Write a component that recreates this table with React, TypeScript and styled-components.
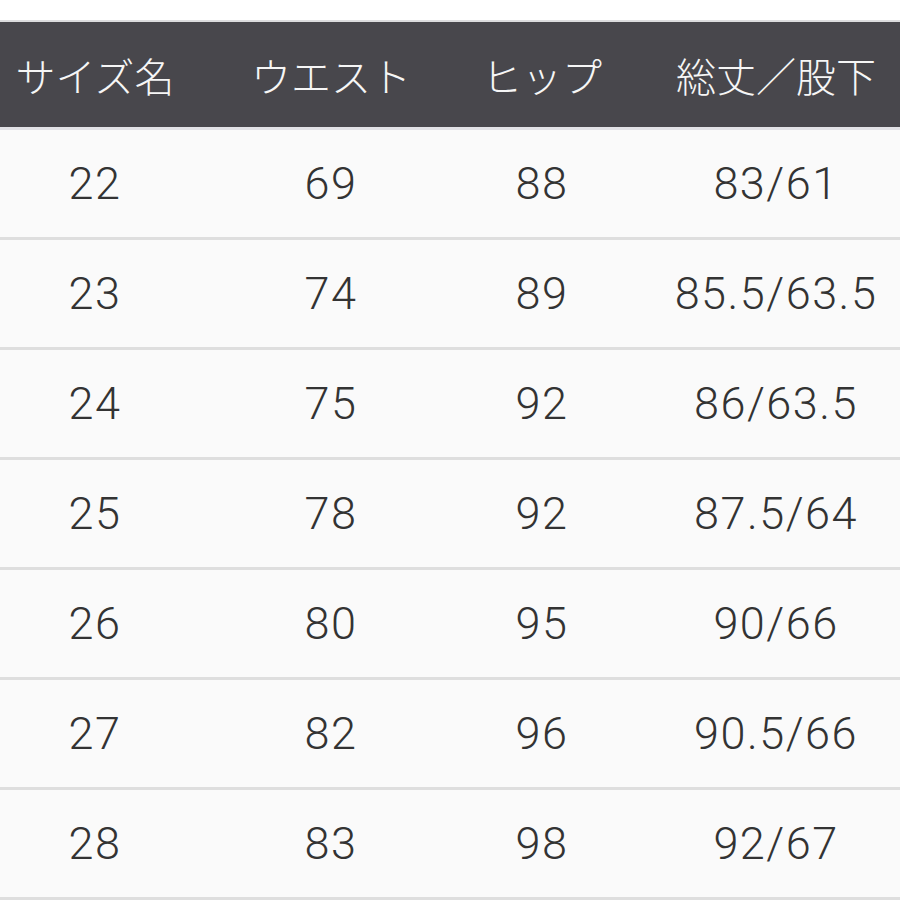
import React from "react";
import styled, { createGlobalStyle } from "styled-components";

const Global = createGlobalStyle`
  html, body { margin: 0; padding: 0; background: #ffffff; }
  body { font-family: "Noto Sans CJK JP", "Noto Sans", sans-serif; }
`;

const Page = styled.div`
  width: 900px;
  overflow: hidden;
  padding-top: 20px;
`;

const Table = styled.div`
  width: 940px;
  border-top: 2px solid #dcdcde;
`;

const Row = styled.div<{ $head?: boolean }>`
  display: grid;
  grid-template-columns: 190px 282px 140px 328px;
  align-items: center;
  box-sizing: border-box;
  height: ${(p) => (p.$head ? "105px" : "110px")};
  background: ${(p) => (p.$head ? "#48474c" : "#fafafa")};
  border-bottom: ${(p) => (p.$head ? "none" : "3px solid #dedede")};
`;

const Body = styled.div`
  border-top: 3px solid #e2e2e6;
`;

const HeadCell = styled.div`
  text-align: center;
  color: #f6f6f6;
  font-family: "Noto Sans CJK JP", sans-serif;
  font-weight: 300;
  font-size: 40px;
  line-height: 1;
  white-space: nowrap;
`;

const Cell = styled.div`
  text-align: center;
  color: #333333;
  font-family: Roboto, "Liberation Sans", sans-serif;
  font-weight: 300;
  font-size: 45px;
  letter-spacing: 1.5px;
  line-height: 1;
  white-space: nowrap;
`;

const headers = ["サイズ名", "ウエスト", "ヒップ", "総丈／股下"];

const rows: string[][] = [
  ["22", "69", "88", "83/61"],
  ["23", "74", "89", "85.5/63.5"],
  ["24", "75", "92", "86/63.5"],
  ["25", "78", "92", "87.5/64"],
  ["26", "80", "95", "90/66"],
  ["27", "82", "96", "90.5/66"],
  ["28", "83", "98", "92/67"],
];

export default function App() {
  return (
    <>
      <Global />
      <Page>
        <Table>
          <Row $head>
            {headers.map((h) => (
              <HeadCell key={h}>{h}</HeadCell>
            ))}
          </Row>
          <Body>
            {rows.map((r) => (
              <Row key={r[0]}>
                {r.map((c, i) => (
                  <Cell key={i}>{c}</Cell>
                ))}
              </Row>
            ))}
          </Body>
        </Table>
      </Page>
    </>
  );
}
